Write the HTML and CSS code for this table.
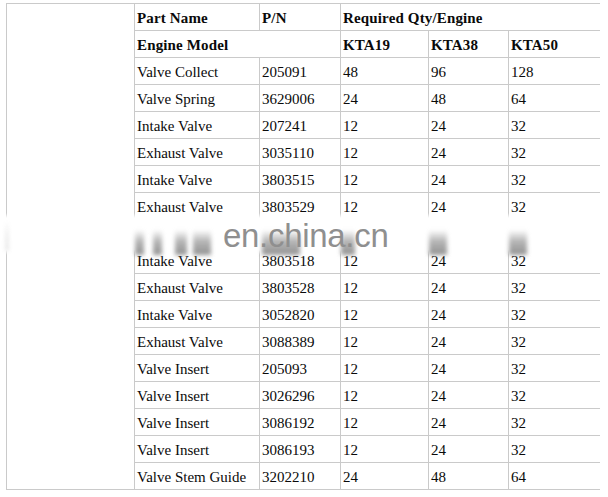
FILE: index.html
```html
<!DOCTYPE html>
<html>
<head>
<meta charset="utf-8">
<link rel="stylesheet" href="styles.css">
</head>
<body>
<div class="page">
  <table class="parts">
    <colgroup>
      <col class="c-side">
      <col class="c-name">
      <col class="c-pn">
      <col class="c-q1">
      <col class="c-q2">
      <col class="c-q3">
    </colgroup>
    <tr>
      <td class="side" rowspan="18"></td>
      <th>Part Name</th>
      <th>P/N</th>
      <th colspan="3" class="last">Required Qty/Engine</th>
    </tr>
    <tr>
      <th colspan="2">Engine Model</th>
      <th>KTA19</th>
      <th>KTA38</th>
      <th class="last">KTA50</th>
    </tr>
    <tr><td>Valve Collect</td><td>205091</td><td>48</td><td>96</td><td class="last">128</td></tr>
    <tr><td>Valve Spring</td><td>3629006</td><td>24</td><td>48</td><td class="last">64</td></tr>
    <tr><td>Intake Valve</td><td>207241</td><td>12</td><td>24</td><td class="last">32</td></tr>
    <tr><td>Exhaust Valve</td><td>3035110</td><td>12</td><td>24</td><td class="last">32</td></tr>
    <tr><td>Intake Valve</td><td>3803515</td><td>12</td><td>24</td><td class="last">32</td></tr>
    <tr><td>Exhaust Valve</td><td>3803529</td><td>12</td><td>24</td><td class="last">32</td></tr>
    <tr><td></td><td></td><td></td><td></td><td class="last"></td></tr>
    <tr><td>Intake Valve</td><td>3803518</td><td>12</td><td>24</td><td class="last">32</td></tr>
    <tr><td>Exhaust Valve</td><td>3803528</td><td>12</td><td>24</td><td class="last">32</td></tr>
    <tr><td>Intake Valve</td><td>3052820</td><td>12</td><td>24</td><td class="last">32</td></tr>
    <tr><td>Exhaust Valve</td><td>3088389</td><td>12</td><td>24</td><td class="last">32</td></tr>
    <tr><td>Valve Insert</td><td>205093</td><td>12</td><td>24</td><td class="last">32</td></tr>
    <tr><td>Valve Insert</td><td>3026296</td><td>12</td><td>24</td><td class="last">32</td></tr>
    <tr><td>Valve Insert</td><td>3086192</td><td>12</td><td>24</td><td class="last">32</td></tr>
    <tr><td>Valve Insert</td><td>3086193</td><td>12</td><td>24</td><td class="last">32</td></tr>
    <tr><td>Valve Stem Guide</td><td>3202210</td><td>24</td><td>48</td><td class="last">64</td></tr>
  </table>

  <div class="watermark">
    <span class="blob b1"></span>
    <span class="blob b2"></span>
    <span class="blob b3"></span>
    <span class="blob b4"></span>
    <span class="blob b5"></span>
    <span class="blob b6"></span>
    <span class="blob b7"></span>
    <span class="blob b8"></span>
    <span class="blob b9"></span>
    <span class="wm-text">en.china.cn</span>
  </div>
</div>
</body>
</html>
```

FILE: styles.css
```css
html, body {
  margin: 0;
  padding: 0;
  background: #ffffff;
}

body {
  font-family: "Liberation Serif", "Times New Roman", serif;
  font-size: 15px;
  color: #0a0a0a;
}

.page {
  position: relative;
  width: 608px;
  height: 497px;
  box-sizing: border-box;
  padding: 3px 0 0 6px;
  overflow: hidden;
}

.parts {
  border-collapse: collapse;
  table-layout: fixed;
  width: 593px;
}

.c-side { width: 128px; }
.c-name { width: 125px; }
.c-pn { width: 81px; }
.c-q1 { width: 88px; }
.c-q2 { width: 80px; }
.c-q3 { width: 91px; }

.parts tr {
  height: 27px;
}

.parts td,
.parts th {
  border: 1px solid #cacaca;
  padding: 2px 0 0 2px;
  text-align: left;
  vertical-align: middle;
  white-space: nowrap;
  font-weight: normal;
  line-height: 17px;
}

.parts th {
  font-weight: bold;
  letter-spacing: 0.15px;
}

.parts .last {
  border-right: none;
}

.parts .side {
  padding: 0;
}

/* watermark band over the 7th data row */
.watermark {
  position: absolute;
  left: 0;
  top: 213px;
  width: 608px;
  height: 42px;
  background: linear-gradient(to bottom,
    rgba(255,255,255,0) 0px,
    #ffffff 5px,
    #ffffff 37px,
    rgba(255,255,255,0) 42px);
}

.blob {
  position: absolute;
  top: 17px;
  height: 25px;
  background: linear-gradient(to bottom, rgba(160,160,160,0), rgba(150,150,150,0.7) 45%, rgba(135,135,135,0.9));
  filter: blur(2px);
}

.b1 { left: 135px; width: 9px; }
.b2 { left: 153px; width: 9px; }
.b3 { left: 175px; width: 12px; }
.b4 { left: 193px; width: 18px; }
.b5 { left: 262px; width: 38px; }
.b6 { left: 341px; width: 14px; }
.b7 { left: 429px; width: 18px; }
.b8 { left: 509px; width: 18px; }
.b9 { left: 6px; width: 2px; top: 8px; height: 30px; opacity: 0.4; }

.wm-text {
  position: absolute;
  left: 223px;
  top: 8px;
  font-family: "Liberation Sans", Arial, sans-serif;
  font-size: 33px;
  line-height: 30px;
  color: #8f8f8f;
  letter-spacing: -0.3px;
}
```
